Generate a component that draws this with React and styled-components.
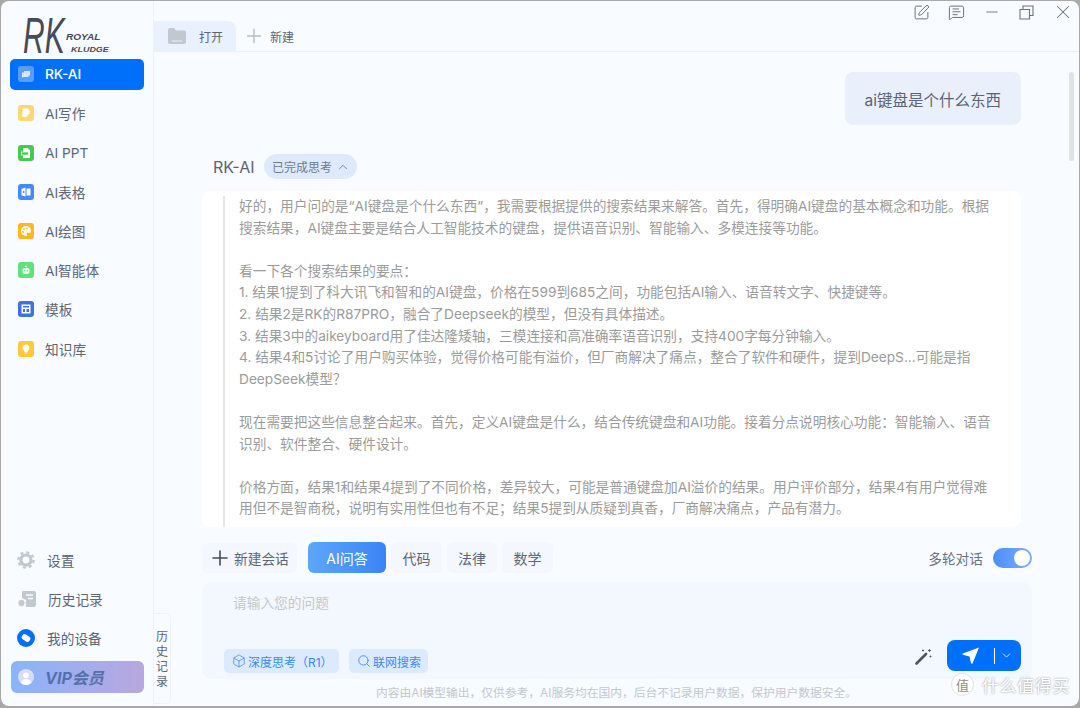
import styled, { createGlobalStyle } from 'styled-components'
import { Plus, Box, Search, ChevronUp, ChevronDown, SquarePen, MessageSquareText, Minus, X } from 'lucide-react'

const FONT = `Inter, "Noto Sans CJK SC", "Noto Sans", sans-serif`

const GlobalStyle = createGlobalStyle`
  html, body { margin: 0; padding: 0; height: 100%; background: #a9a9a9; }
  #root { height: 100%; }
  * { box-sizing: border-box; }
  body { font-family: ${FONT}; overflow: hidden; }
`

const navItems = [
  { label: 'RK-AI', color: '#5a9cfb', kind: 'chat', active: true },
  { label: 'AI写作', color: '#ffd772', kind: 'doc' },
  { label: 'AI PPT', color: '#45cb54', kind: 'ppt' },
  { label: 'AI表格', color: '#3f8cff', kind: 'sheet' },
  { label: 'AI绘图', color: '#ffb81f', kind: 'paint' },
  { label: 'AI智能体', color: '#62e07a', kind: 'bot' },
  { label: '模板', color: '#4170e0', kind: 'tpl' },
  { label: '知识库', color: '#ffc93c', kind: 'bulb' },
]

const thinkLines = [
  '好的，用户问的是“AI键盘是个什么东西”，我需要根据提供的搜索结果来解答。首先，得明确AI键盘的基本概念和功能。根据',
  '搜索结果，AI键盘主要是结合人工智能技术的键盘，提供语音识别、智能输入、多模连接等功能。',
  '',
  '看一下各个搜索结果的要点：',
  '1. 结果1提到了科大讯飞和智和的AI键盘，价格在599到685之间，功能包括AI输入、语音转文字、快捷键等。',
  '2. 结果2是RK的R87PRO，融合了Deepseek的模型，但没有具体描述。',
  '3. 结果3中的aikeyboard用了佳达隆矮轴，三模连接和高准确率语音识别，支持400字每分钟输入。',
  '4. 结果4和5讨论了用户购买体验，觉得价格可能有溢价，但厂商解决了痛点，整合了软件和硬件，提到DeepS...可能是指',
  'DeepSeek模型？',
  '',
  '现在需要把这些信息整合起来。首先，定义AI键盘是什么，结合传统键盘和AI功能。接着分点说明核心功能：智能输入、语音',
  '识别、软件整合、硬件设计。',
  '',
  '价格方面，结果1和结果4提到了不同价格，差异较大，可能是普通键盘加AI溢价的结果。用户评价部分，结果4有用户觉得难',
  '用但不是智商税，说明有实用性但也有不足；结果5提到从质疑到真香，厂商解决痛点，产品有潜力。',
  '',
]

const Window = styled.div`
  position: relative;
  width: 1078px;
  height: 705px;
  margin: 1px 0 0 1px;
  display: flex;
  background: #f8fbff;
  border-radius: 8px;
  overflow: hidden;
`
const Sidebar = styled.aside`
  width: 153px;
  flex: none;
  display: flex;
  flex-direction: column;
  padding: 0 9px 13px 9px;
  border-right: 1px solid #eef3fb;
`
const LogoBox = styled.div`
  height: 57.7px;
  padding: 7px 0 0 13px;
  flex: none;
`
const NavList = styled.nav`
  display: flex;
  flex-direction: column;
  gap: 8.2px;
  flex: 1;
`
const NavItem = styled.div`
  height: 31px;
  display: flex;
  align-items: center;
  gap: 11px;
  padding-left: 8px;
  border-radius: 5px;
  font-size: 13.7px;
  color: ${p => (p.$active ? '#ffffff' : '#5d6675')};
  background: ${p => (p.$active ? '#0070fb' : 'transparent')};
  font-weight: ${p => (p.$active ? 500 : 400)};
`
const NavIconBox = styled.span`
  width: 16px;
  height: 16px;
  flex: none;
  display: block;
  border-radius: 3px;
  background: ${p => p.$color};
`
const BottomList = styled.div`
  display: flex;
  flex-direction: column;
  gap: 7px;
`
const BottomItem = styled.div`
  height: 32px;
  display: flex;
  align-items: center;
  gap: 12px;
  padding-left: 7px;
  font-size: 13.7px;
  color: #5d6675;
`
const VipCard = styled.div`
  height: 32px;
  margin: 7px 0 0 1px;
  display: flex;
  align-items: center;
  gap: 11px;
  padding-left: 7px;
  border-radius: 6px;
  background: linear-gradient(90deg, #8ab4fb, #b9a6de);
  color: #5470ad;
  font-size: 16px;
  font-weight: 700;
  font-style: italic;
`
const Main = styled.main`
  flex: 1;
  min-width: 0;
  position: relative;
  display: flex;
  flex-direction: column;
`
const TabBar = styled.header`
  height: 51px;
  flex: none;
  display: flex;
  align-items: flex-end;
  border-bottom: 1px solid #e9f1fc;
`
const OpenTab = styled.div`
  width: 82px;
  height: 30px;
  display: flex;
  align-items: center;
  gap: 13px;
  padding-left: 14px;
  background: #e8f1fd;
  border-radius: 0 8px 0 0;
  font-size: 12px;
  color: #5d6675;
`
const NewTab = styled.div`
  height: 30px;
  display: flex;
  align-items: center;
  gap: 5px;
  padding-left: 7px;
  font-size: 12px;
  color: #5d6675;
`
const WindowControls = styled.div`
  margin-left: auto;
  align-self: flex-start;
  display: flex;
  align-items: center;
  gap: 18px;
  padding: 0 5px 0 0;
  color: #6b7280;
`
const Chat = styled.section`
  flex: 1;
  min-height: 0;
  display: flex;
  flex-direction: column;
  padding: 20px 58px 0 48px;
`
const UserBubble = styled.div`
  align-self: flex-end;
  height: 53px;
  padding: 0 20px;
  display: flex;
  align-items: center;
  background: #e9f0fc;
  border-radius: 8px;
  font-size: 15.5px;
  color: #5b6472;
`
const BotHead = styled.div`
  display: flex;
  align-items: center;
  gap: 10px;
  margin: 29px 0 12px 10px;
  height: 25px;
`
const BotName = styled.span`
  font-size: 16px;
  margin-left: 1px;
  color: #5b6472;
`
const ThinkPill = styled.div`
  height: 25px;
  width: 93px;
  display: flex;
  align-items: center;
  justify-content: center;
  gap: 4px;
  border-radius: 13px;
  background: #deeafc;
  font-size: 12px;
  color: #6b7a90;
`
const ThinkCard = styled.div`
  flex: 1;
  min-height: 0;
  overflow: hidden;
  background: #ffffff;
  border-radius: 8px;
  padding: 5px 0 0 21px;
`
const ThinkBody = styled.div`
  border-left: 2px solid #e4e4e4;
  padding-left: 14px;
`
const ThinkLine = styled.div`
  height: 21.6px;
  line-height: 21.6px;
  font-size: 13.7px;
  color: #9b9b9b;
  white-space: nowrap;
`
const ScrollThumb = styled.div`
  position: absolute;
  right: 5px;
  top: 71px;
  width: 5px;
  height: 89px;
  border-radius: 3px;
  background: #e2e2e2;
`
const Toolbar = styled.div`
  height: 31px;
  flex: none;
  margin: 15px 47px 0 48px;
  display: flex;
  align-items: center;
  gap: 5px;
`
const NewChatButton = styled.div`
  width: 95px;
  height: 30px;
  margin-right: 6px;
  display: flex;
  align-items: center;
  gap: 2px;
  padding-left: 6px;
  background: #f4f7fd;
  border-radius: 6px;
  font-size: 13.7px;
  color: #5d6675;
`
const ModeTab = styled.div`
  width: ${p => p.$width}px;
  height: 31px;
  display: flex;
  align-items: center;
  justify-content: center;
  border-radius: 6px;
  font-size: 14px;
  background: ${p => (p.$active ? 'linear-gradient(90deg, #5ea6f8, #3b84f7)' : '#f4f7fd')};
  color: ${p => (p.$active ? '#ffffff' : '#5d6675')};
`
const MultiRound = styled.div`
  margin-left: auto;
  display: flex;
  align-items: center;
  gap: 10px;
  font-size: 13.7px;
  color: #6b7280;
`
const Toggle = styled.div`
  width: 39px;
  height: 20px;
  padding: 2px;
  display: flex;
  justify-content: flex-end;
  border-radius: 10px;
  background: linear-gradient(90deg, #4a8df8, #7fb0fa);
`
const ToggleKnob = styled.span`
  width: 16px;
  height: 16px;
  border-radius: 50%;
  background: #ffffff;
`
const Composer = styled.div`
  height: 97px;
  flex: none;
  margin: 9px 47px 0 48px;
  padding: 12px 11px 6px 22px;
  display: flex;
  flex-direction: column;
  justify-content: space-between;
  background: #f3f7fe;
  border-radius: 10px;
`
const Placeholder = styled.div`
  padding-left: 9px;
  font-size: 13.7px;
  line-height: 18px;
  color: #c3c7cf;
`
const ComposerRow = styled.div`
  display: flex;
  align-items: flex-end;
  gap: 10px;
`
const Chip = styled.div`
  height: 24px;
  display: flex;
  align-items: center;
  gap: 2px;
  padding: 0 6.5px 0 8px;
  background: #dceafd;
  border-radius: 5px;
  font-size: 12px;
  color: #3a8af5;
`
const WandButton = styled.div`
  margin: 0 5px 8px auto;
  display: flex;
`
const SendButton = styled.div`
  width: 74px;
  height: 31px;
  margin-bottom: 2px;
  display: flex;
  align-items: center;
  padding-left: 15px;
  background: #0070fb;
  border-radius: 8px;
  color: #ffffff;
`
const SendDivider = styled.span`
  width: 1px;
  height: 16px;
  margin: 0 5px 0 15px;
  background: #ffffff;
`
const Footer = styled.footer`
  flex: none;
  height: 27px;
  text-align: center;
  padding-top: 6px;
  font-size: 11.75px;
  line-height: 16px;
  color: #c3c7cf;
`
const HistoryTab = styled.div`
  position: absolute;
  left: 0;
  top: 612px;
  width: 17px;
  height: 91px;
  display: flex;
  align-items: center;
  justify-content: center;
  text-align: center;
  background: #f8fbff;
  border: 1px solid #eef3fb;
  border-left: 0;
  border-radius: 0 5px 5px 0;
  font-size: 12px;
  line-height: 15px;
  color: #5d6675;
`
const Watermark = styled.div`
  position: absolute;
  right: 9px;
  bottom: 9px;
  display: flex;
  align-items: center;
  gap: 8px;
  font-size: 17px;
  letter-spacing: 0.6px;
  color: #ffffff;
  text-shadow: 0 0 2px rgba(90, 90, 90, 0.75);
`
const WatermarkBadge = styled.span`
  width: 23px;
  height: 23px;
  display: flex;
  align-items: center;
  justify-content: center;
  border-radius: 50%;
  background: rgba(255, 255, 255, 0.9);
  border: 1px solid #e2e2e2;
  font-size: 13px;
  letter-spacing: 0;
  color: #8c8c8c;
  text-shadow: none;
`

function RkLogo() {
  return (
    <svg width="92" height="50" viewBox="0 0 92 50" style={{ display: 'block', overflow: 'visible' }} fontFamily="Liberation Sans, sans-serif" fontStyle="italic" fill="#444c58">
      <text transform="translate(0 45) scale(0.6 1)" fontSize="50">RK</text>
      <text transform="translate(43 32) scale(1.12 1)" fontWeight="700" fontSize="9">ROYAL</text>
      <text transform="translate(48 44) scale(1.12 1)" fontWeight="700" fontSize="8">KLUDGE</text>
    </svg>
  )
}

function NavGlyph({ kind, color }) {
  return (
    <NavIconBox $color={color}>
      <svg width="16" height="16" viewBox="0 0 16 16" style={{ display: 'block' }}>
        {kind === 'chat' && <path d="M4 6.500h2V5h6v4.500h-1.500V11H5l-1 1z" fill="#fff" opacity=".75" />}
        {kind === 'doc' && <path d="M4.500 3.500h5l2 2v3l-3 3.500h-4z" fill="#fff" />}
        {kind === 'ppt' && <><path d="M5 3h4.500L12 5.500V13H5z" fill="#fff" /><rect x="3.500" y="7" width="7" height="3" fill="#45cb54" stroke="#fff" strokeWidth=".7" /></>}
        {kind === 'sheet' && <><path d="M3.500 5l4-1.500v9l-4-1.200z" fill="#fff" /><rect x="8.500" y="4.500" width="4" height="7" fill="#fff" /><rect x="5" y="7" width="1.400" height="2" fill="#3f8cff" /></>}
        {kind === 'paint' && <><path d="M8 3a5 5 0 1 0 0 10c1.400 0 1.200-1.300.8-2-.3-.7.2-1.300 1-1.300H12c.8 0 1.200-.6 1-1.700C12.500 4.800 10.500 3 8 3z" fill="#fff" /><circle cx="6" cy="6" r=".9" fill="#ffb81f" /><circle cx="9" cy="5.500" r=".9" fill="#ffb81f" /><circle cx="5" cy="9" r=".9" fill="#ffb81f" /></>}
        {kind === 'bot' && <><rect x="4.500" y="6" width="7" height="6" rx="2" fill="#fff" opacity=".9" /><circle cx="8" cy="4.500" r="1" fill="#fff" /><circle cx="6.700" cy="8.700" r=".8" fill="#62e07a" /><circle cx="9.300" cy="8.700" r=".8" fill="#62e07a" /></>}
        {kind === 'tpl' && <path d="M3.500 3.500h9v9h-9zM5 5v1.500h6V5zM5 8v3h2V8zM8.500 8v3H11V8z" fill="#fff" fillRule="evenodd" />}
        {kind === 'bulb' && <><path d="M8 3.500a3.300 3.300 0 0 0-2 6l.4 1.500h3.200l.4-1.500a3.300 3.300 0 0 0-2-6z" fill="#fff" /><rect x="6.700" y="11.500" width="2.600" height="1" fill="#fff" /></>}
      </svg>
    </NavIconBox>
  )
}

function GearIcon() {
  return (
    <svg width="18" height="18" viewBox="0 0 18 18" style={{ display: 'block' }}>
      <circle cx="9" cy="9" r="5" fill="none" stroke="#c2c8d0" strokeWidth="3.200" />
      <circle cx="9" cy="9" r="7.600" fill="none" stroke="#c2c8d0" strokeWidth="2.400" strokeDasharray="3 2.970" />
    </svg>
  )
}

function HistoryIcon() {
  return (
    <svg width="20" height="18" viewBox="0 0 20 18" style={{ display: 'block', marginRight: '-1px' }}>
      <path d="M5 1h12a2 2 0 0 1 2 2v12a2 2 0 0 1-2 2H9V10L5 8z" fill="#c2c8d0" />
      <path d="M9 5h7M11 8.500h5" stroke="#f8fbff" strokeWidth="1.500" />
      <circle cx="4.500" cy="13" r="3.700" fill="#c2c8d0" stroke="#f8fbff" strokeWidth="1" />
    </svg>
  )
}

function DeviceIcon() {
  return (
    <svg width="18" height="18" viewBox="0 0 18 18" style={{ display: 'block' }}>
      <circle cx="9" cy="9" r="9" fill="#0070fb" />
      <rect x="4.500" y="6.200" width="9" height="5.600" rx="2.500" fill="#fff" transform="rotate(35 9 9)" />
    </svg>
  )
}

function VipAvatar() {
  return (
    <svg width="16" height="16" viewBox="0 0 16 16" style={{ display: 'block', flex: 'none' }}>
      <circle cx="8" cy="8" r="8" fill="#d9dcf6" />
      <circle cx="8" cy="6.200" r="2.800" fill="#fff" />
      <path d="M3 14a5 4 0 0 1 10 0 8 8 0 0 1-10 0z" fill="#fff" />
    </svg>
  )
}

function FolderIcon() {
  return (
    <svg width="18" height="16" viewBox="0 0 18 16" style={{ display: 'block' }}>
      <path d="M0 2a2 2 0 0 1 2-2h4l2 2.500h8a2 2 0 0 1 2 2V14a2 2 0 0 1-2 2H2a2 2 0 0 1-2-2z" fill="#c2c8d0" />
      <rect x="4" y="12.500" width="10" height="1" fill="#e8f1fd" />
    </svg>
  )
}

function SendIcon() {
  return (
    <svg width="17" height="17" viewBox="0 0 17 17" style={{ display: 'block', flex: 'none' }}>
      <path d="M17 0.500 L10.500 16.500 Q9.500 17 9 16 L7.500 9.500 L0.800 7.800 Q0 7 0.800 6.500z" fill="#fff" />
    </svg>
  )
}

function WandIcon() {
  return (
    <svg width="17" height="17" viewBox="0 0 17 17" style={{ display: 'block' }}>
      <path d="M1.500 15.500 L11 6" stroke="#4b5563" strokeWidth="2.600" strokeLinecap="round" />
      <path d="M14.500 1v3M13 2.500h3M15.500 7.500v2M14.500 8.500h2M8 1.500v2M7 2.500h2" stroke="#4b5563" strokeWidth="0.900" />
    </svg>
  )
}

function RestoreIcon() {
  return (
    <svg width="15" height="15" viewBox="0 0 15 15" style={{ display: 'block' }}>
      <path d="M1 4.500h9.500V14H1z M4 4.500V1h10v9.500h-3.500" fill="none" stroke="#6b7280" strokeWidth="1.100" />
    </svg>
  )
}

export default function App() {
  return (
    <>
      <GlobalStyle />
      <Window>
        <Sidebar>
          <LogoBox><RkLogo /></LogoBox>
          <NavList>
            {navItems.map(item => (
              <NavItem key={item.label} $active={item.active}>
                <NavGlyph kind={item.kind} color={item.color} />
                {item.label}
              </NavItem>
            ))}
          </NavList>
          <BottomList>
            <BottomItem><GearIcon />设置</BottomItem>
            <BottomItem><HistoryIcon />历史记录</BottomItem>
            <BottomItem><DeviceIcon />我的设备</BottomItem>
          </BottomList>
          <VipCard><VipAvatar />VIP会员</VipCard>
        </Sidebar>
        <Main>
          <TabBar>
            <OpenTab><FolderIcon />打开</OpenTab>
            <NewTab><Plus size={22} strokeWidth={1.600} color="#b8bec8" />新建</NewTab>
            <WindowControls>
              <SquarePen size={17} strokeWidth={1.400} />
              <MessageSquareText size={17} strokeWidth={1.400} />
              <Minus size={18} strokeWidth={1.200} />
              <RestoreIcon />
              <X size={22} strokeWidth={1.100} />
            </WindowControls>
          </TabBar>
          <Chat>
            <UserBubble>ai键盘是个什么东西</UserBubble>
            <BotHead>
              <BotName>RK-AI</BotName>
              <ThinkPill>已完成思考<ChevronUp size={14} strokeWidth={1.500} /></ThinkPill>
            </BotHead>
            <ThinkCard>
              <ThinkBody>
                {thinkLines.map((line, i) => <ThinkLine key={i}>{line}</ThinkLine>)}
              </ThinkBody>
            </ThinkCard>
          </Chat>
          <ScrollThumb />
          <Toolbar>
            <NewChatButton><Plus size={24} strokeWidth={1.600} color="#444c58" />新建会话</NewChatButton>
            <ModeTab $active $width={78}>AI问答</ModeTab>
            <ModeTab $width={51}>代码</ModeTab>
            <ModeTab $width={50}>法律</ModeTab>
            <ModeTab $width={51}>数学</ModeTab>
            <MultiRound>多轮对话<Toggle><ToggleKnob /></Toggle></MultiRound>
          </Toolbar>
          <Composer>
            <Placeholder>请输入您的问题</Placeholder>
            <ComposerRow>
              <Chip><Box size={14} strokeWidth={1.300} />深度思考（R1）</Chip>
              <Chip><Search size={14} strokeWidth={1.500} />联网搜索</Chip>
              <WandButton><WandIcon /></WandButton>
              <SendButton>
                <SendIcon />
                <SendDivider />
                <ChevronDown size={13} strokeWidth={1.500} />
              </SendButton>
            </ComposerRow>
          </Composer>
          <Footer>内容由AI模型输出，仅供参考，AI服务均在国内，后台不记录用户数据，保护用户数据安全。</Footer>
          <HistoryTab>历<br />史<br />记<br />录</HistoryTab>
        </Main>
        <Watermark><WatermarkBadge>值</WatermarkBadge>什么值得买</Watermark>
      </Window>
    </>
  )
}
